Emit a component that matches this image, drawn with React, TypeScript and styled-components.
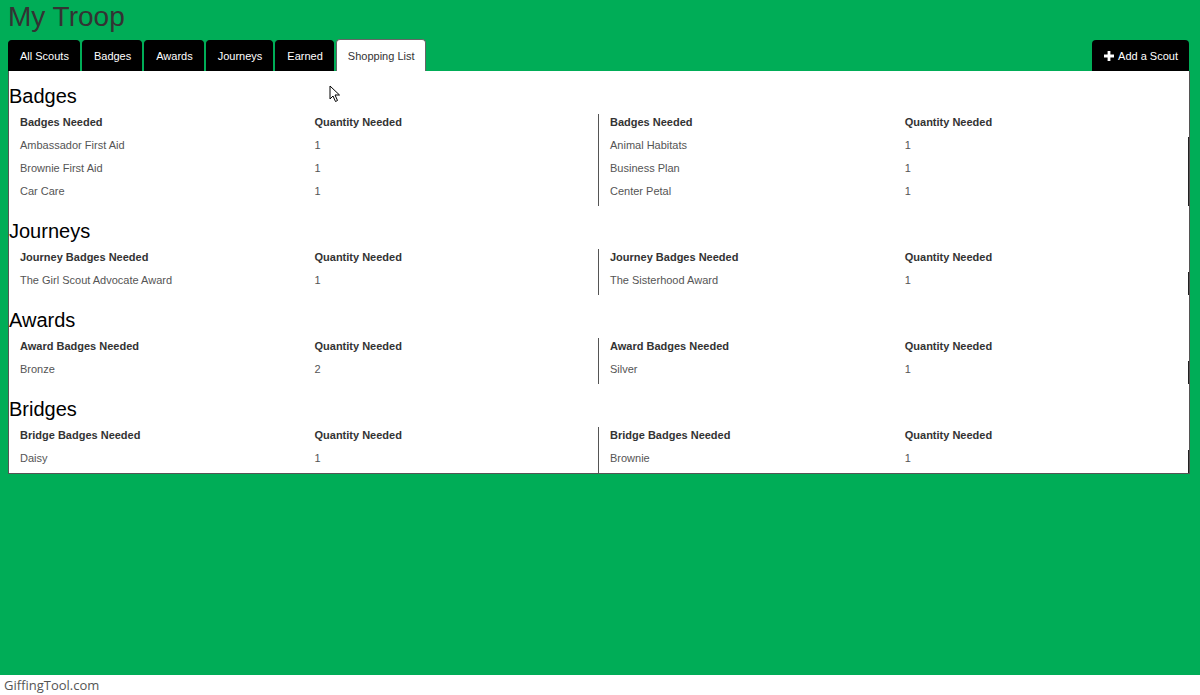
import React from "react";
import styled, { createGlobalStyle } from "styled-components";

const Global = createGlobalStyle`
  html, body { margin: 0; padding: 0; background: #fff; }
  body { font-family: "Liberation Sans", Arial, sans-serif; }
`;

const Page = styled.div`
  width: 1200px;
  height: 695px;
  display: flex;
  flex-direction: column;
  overflow: hidden;
`;

const Main = styled.div`
  height: 675px;
  background: #00ad57;
  padding: 0 10px 0 8px;
  box-sizing: border-box;
  display: flex;
  flex-direction: column;
`;

const Title = styled.h1`
  margin: 0 0 7px 0;
  padding-top: 1px;
  font-size: 28px;
  line-height: 32px;
  font-weight: normal;
  color: #333;
`;

const TabBar = styled.div`
  display: flex;
  height: 31px;
  align-items: stretch;
`;

const Tab = styled.div<{ $active?: boolean }>`
  display: flex;
  align-items: center;
  padding: 0 10px 0 11px;
  margin-right: 2px;
  font-size: 11px;
  border-radius: 4px 4px 0 0;
  box-sizing: border-box;
  background: ${(p) => (p.$active ? "#fff" : "#000")};
  color: ${(p) => (p.$active ? "#333" : "#fff")};
  border: 1px solid ${(p) => (p.$active ? "#666" : "#000")};
  border-bottom: none;
  ${(p) => (p.$active ? "margin-top: -1px; height: 32px;" : "")}
`;

const AddButton = styled.div`
  margin-left: auto;
  margin-right: 1px;
  display: flex;
  align-items: center;
  gap: 4px;
  padding: 0 11px 0 12px;
  background: #000;
  color: #fff;
  font-size: 11px;
  border-radius: 4px 4px 0 0;
`;

const Panel = styled.div`
  position: relative;
  background: #fff;
  border: 1px solid #555;
  border-top: none;
  display: flex;
  flex-direction: column;
`;

const SectionTitle = styled.h2`
  margin: 0;
  padding: 14px 0 7px 0;
  font-size: 20px;
  line-height: 22px;
  font-weight: normal;
  color: #000;
`;

const Halves = styled.div`
  display: grid;
  grid-template-columns: 589fr 591fr;
`;

const Half = styled.div<{ $right?: boolean }>`
  border-left: ${(p) => (p.$right ? "1px solid #555" : "none")};
`;

const Table = styled.table`
  width: 100%;
  border-collapse: collapse;
  table-layout: fixed;
`;

const Th = styled.th`
  text-align: left;
  font-size: 11px;
  font-weight: bold;
  color: #333;
  padding: 1px 0 7px 11px;
  line-height: 15px;
`;

const Td = styled.td<{ $edge?: boolean }>`
  font-size: 11px;
  color: #555;
  padding: 1px 0 7px 11px;
  line-height: 15px;
  border-right: ${(p) => (p.$edge ? "1px solid #222" : "none")};
`;

const Cursor = styled.svg`
  position: absolute;
  left: 320px;
  top: 14px;
`;

const Footer = styled.div`
  height: 20px;
  background: #fff;
  font-family: "Open Sans", sans-serif;
  font-size: 13px;
  color: #555;
  padding-left: 4px;
  line-height: 20px;
`;

type Row = [string, string];
type Section = {
  title: string;
  header: string;
  left: Row[];
  right: Row[];
};

const sections: Section[] = [
  {
    title: "Badges",
    header: "Badges Needed",
    left: [
      ["Ambassador First Aid", "1"],
      ["Brownie First Aid", "1"],
      ["Car Care", "1"],
    ],
    right: [
      ["Animal Habitats", "1"],
      ["Business Plan", "1"],
      ["Center Petal", "1"],
    ],
  },
  {
    title: "Journeys",
    header: "Journey Badges Needed",
    left: [["The Girl Scout Advocate Award", "1"]],
    right: [["The Sisterhood Award", "1"]],
  },
  {
    title: "Awards",
    header: "Award Badges Needed",
    left: [["Bronze", "2"]],
    right: [["Silver", "1"]],
  },
  {
    title: "Bridges",
    header: "Bridge Badges Needed",
    left: [["Daisy", "1"]],
    right: [["Brownie", "1"]],
  },
];

const ShopTable: React.FC<{ header: string; rows: Row[]; right?: boolean }> = ({
  header,
  rows,
  right,
}) => (
  <Table>
    <thead>
      <tr>
        <Th>{header}</Th>
        <Th>Quantity Needed</Th>
      </tr>
    </thead>
    <tbody>
      {rows.map(([name, qty]) => (
        <tr key={name}>
          <Td>{name}</Td>
          <Td $edge={right}>{qty}</Td>
        </tr>
      ))}
    </tbody>
  </Table>
);

const tabs = ["All Scouts", "Badges", "Awards", "Journeys", "Earned", "Shopping List"];

export default function App() {
  return (
    <Page>
      <Global />
      <Main>
        <Title>My Troop</Title>
        <TabBar>
          {tabs.map((t) => (
            <Tab key={t} $active={t === "Shopping List"}>
              {t}
            </Tab>
          ))}
          <AddButton>
            <svg width="10" height="10" viewBox="0 0 10 10">
              <path d="M3.6 0h2.8v3.6H10v2.8H6.4V10H3.6V6.4H0V3.6h3.6z" fill="#fff" />
            </svg>
            Add a Scout
          </AddButton>
        </TabBar>
        <Panel>
          <Cursor width="12" height="18" viewBox="0 0 12 18">
            <path
              d="M1 1v13l3-3 2.5 5.5 2-1L6 10h4.5z"
              fill="#fff"
              stroke="#000"
              strokeWidth="1"
              strokeLinejoin="round"
            />
          </Cursor>
          {sections.map((s) => (
            <div key={s.title}>
              <SectionTitle>{s.title}</SectionTitle>
              <Halves>
                <Half>
                  <ShopTable header={s.header} rows={s.left} />
                </Half>
                <Half $right>
                  <ShopTable header={s.header} rows={s.right} right />
                </Half>
              </Halves>
            </div>
          ))}
        </Panel>
      </Main>
      <Footer>GiffingTool.com</Footer>
    </Page>
  );
}
